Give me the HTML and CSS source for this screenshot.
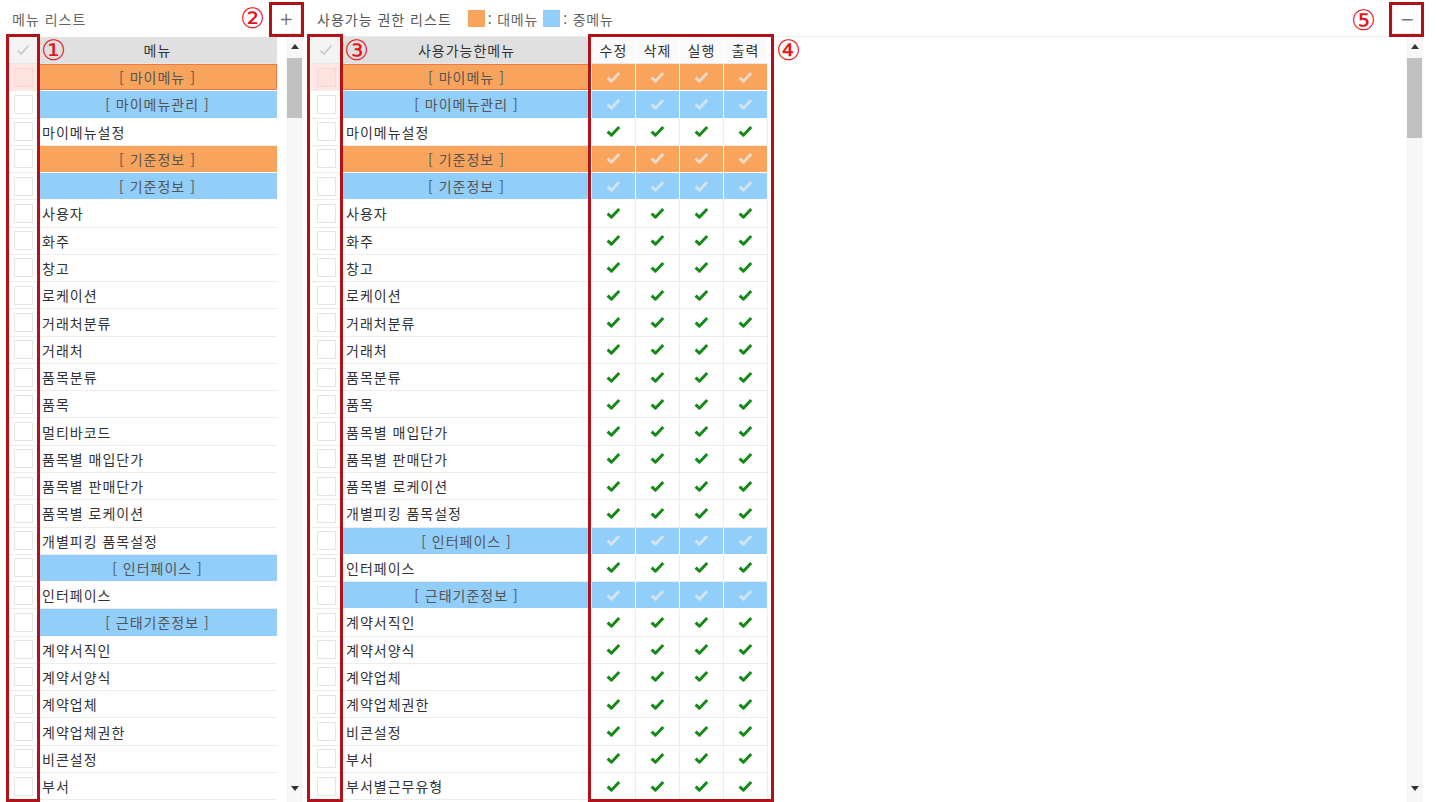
FILE: index.html
```html
<!DOCTYPE html>
<html lang="ko">
<head>
  <meta charset="UTF-8">
  <title>메뉴 권한 관리</title>
  <link rel="stylesheet" href="styles.css">
</head>
<body>
  <div class="screen">
    <div class="panel panel-left">
      <div class="panel-head">
        <span class="title">메뉴 리스트</span>
        <button class="tool-btn">+</button>
      </div>
      <div class="grid">
        <div class="grid-body">
          <div class="row head">
            <div class="cell cell-check head-check"><svg width="14" height="12" viewBox="0 0 14 12"><path d="M1.5 6.5 L5 10 L12.5 1.5" fill="none" stroke="#c8c8c8" stroke-width="1.6"/></svg></div>
            <div class="cell cell-menu head-menu left-menu">메뉴</div>
          </div>
          <div id="left-rows"></div>
        </div>
        <div class="scrollbar">
          <span class="arrow up"></span>
          <span class="thumb thumb-left"></span>
          <span class="arrow down"></span>
        </div>
      </div>
    </div>

    <div class="panel panel-right">
      <div class="panel-head">
        <div class="title-line">
          <span class="title title-dark">사용가능 권한 리스트</span>
          <span class="legend"><i class="swatch swatch-big"></i>: 대메뉴 <i class="swatch swatch-mid"></i>: 중메뉴</span>
        </div>
        <button class="tool-btn">&minus;</button>
      </div>
      <div class="grid grid-right">
        <div class="grid-body">
          <div class="row head">
            <div class="cell cell-check head-check"><svg width="14" height="12" viewBox="0 0 14 12"><path d="M1.5 6.5 L5 10 L12.5 1.5" fill="none" stroke="#c8c8c8" stroke-width="1.6"/></svg></div>
            <div class="cell cell-menu head-menu right-menu">사용가능한메뉴</div>
            <div class="cell cell-perm head-perm">수정</div>
            <div class="cell cell-perm head-perm">삭제</div>
            <div class="cell cell-perm head-perm">실행</div>
            <div class="cell cell-perm head-perm">출력</div>
            <div class="cell cell-fill"></div>
          </div>
          <div id="right-rows"></div>
        </div>
        <div class="scrollbar">
          <span class="arrow up"></span>
          <span class="thumb thumb-right"></span>
          <span class="arrow down"></span>
        </div>
      </div>
    </div>

    <!-- 설명용 표시 -->
    <div class="mark box-1"></div>
    <div class="mark box-2"></div>
    <div class="mark box-3"></div>
    <div class="mark box-4"></div>
    <div class="mark box-5"></div>
    <span class="num num-1">①</span>
    <span class="num num-2">②</span>
    <span class="num num-3">③</span>
    <span class="num num-4">④</span>
    <span class="num num-5">⑤</span>
  </div>

  <script>
    const leftMenus = [
      ['big', '마이메뉴'], ['mid', '마이메뉴관리'], ['', '마이메뉴설정'],
      ['big', '기준정보'], ['mid', '기준정보'], ['', '사용자'], ['', '화주'],
      ['', '창고'], ['', '로케이션'], ['', '거래처분류'], ['', '거래처'],
      ['', '품목분류'], ['', '품목'], ['', '멀티바코드'], ['', '품목별 매입단가'],
      ['', '품목별 판매단가'], ['', '품목별 로케이션'], ['', '개별피킹 품목설정'],
      ['mid', '인터페이스'], ['', '인터페이스'], ['mid', '근태기준정보'],
      ['', '계약서직인'], ['', '계약서양식'], ['', '계약업체'], ['', '계약업체권한'],
      ['', '비콘설정'], ['', '부서']
    ];

    const rightMenus = [
      ['big', '마이메뉴'], ['mid', '마이메뉴관리'], ['', '마이메뉴설정'],
      ['big', '기준정보'], ['mid', '기준정보'], ['', '사용자'], ['', '화주'],
      ['', '창고'], ['', '로케이션'], ['', '거래처분류'], ['', '거래처'],
      ['', '품목분류'], ['', '품목'], ['', '품목별 매입단가'], ['', '품목별 판매단가'],
      ['', '품목별 로케이션'], ['', '개별피킹 품목설정'], ['mid', '인터페이스'],
      ['', '인터페이스'], ['mid', '근태기준정보'], ['', '계약서직인'], ['', '계약서양식'],
      ['', '계약업체'], ['', '계약업체권한'], ['', '비콘설정'], ['', '부서'],
      ['', '부서별근무유형']
    ];

    const check = '<svg width="15" height="13" viewBox="0 0 15 13"><path d="M1.6 6.6 L5.4 10.2 L13.2 2" fill="none" stroke="currentColor" stroke-width="3" stroke-linejoin="round"/></svg>';

    function buildRows(list, withPerms) {
      return list.map(function (item, i) {
        const type = item[0];
        const label = type ? '[ ' + item[1] + ' ]' : item[1];
        let cls = 'row';
        if (type) cls += ' row-' + type;
        if (i === 0) cls += ' selected';
        let html = '<div class="' + cls + '">';
        html += '<div class="cell cell-check"><span class="box"></span></div>';
        html += '<div class="cell cell-menu ' + (withPerms ? 'right-menu' : 'left-menu') + '">' + label + '</div>';
        if (withPerms) {
          for (let k = 0; k < 4; k++) html += '<div class="cell cell-perm">' + check + '</div>';
          html += '<div class="cell cell-fill"></div>';
        }
        return html + '</div>';
      }).join('');
    }

    document.getElementById('left-rows').innerHTML = buildRows(leftMenus, false);
    document.getElementById('right-rows').innerHTML = buildRows(rightMenus, true);
  </script>
</body>
</html>
```

FILE: styles.css
```css
* {
  box-sizing: border-box;
}
body {
  margin: 0;
  font-family: "Noto Sans CJK KR", "Noto Sans", sans-serif;
  font-size: 14px;
  letter-spacing: 1px;
  color: #333;
  background-color: #fff;
}
.screen {
  position: relative;
  display: flex;
  gap: 8px;
  height: 802px;
  padding-left: 9px;
  overflow: hidden;
}
.panel {
  display: flex;
  flex-direction: column;
}
.panel-left {
  width: 294px;
}
.panel-right {
  width: 1114px;
}
.panel-head {
  height: 37px;
  display: flex;
  align-items: center;
  justify-content: space-between;
}
.panel-left .panel-head {
  padding: 0 2px 0 3px;
}
.panel-right .panel-head {
  padding: 0 3px 0 6px;
}
.title {
  color: #666;
  font-size: 14px;
}
.title-dark {
  color: #555;
}
.title-line {
  display: flex;
  align-items: center;
}
.legend {
  display: flex;
  align-items: center;
  margin-left: 16px;
  color: #666;
  font-size: 14px;
  letter-spacing: 0.8px;
}
.swatch {
  display: inline-block;
  width: 17px;
  height: 17px;
  margin-right: 3px;
}
.swatch-big {
  background-color: #f8a45c;
}
.swatch-mid {
  background-color: #91cefa;
  margin-left: 5px;
}
.tool-btn {
  width: 30px;
  height: 30px;
  padding: 0;
  border: 1px solid #ececec;
  background-color: #fff;
  color: #777;
  font-family: "DejaVu Sans", sans-serif;
  font-size: 17px;
  line-height: 26px;
  letter-spacing: 0;
}
.grid {
  display: flex;
  gap: 3px;
  flex: 1;
  overflow: hidden;
}
.grid-right {
  border-top: 1px solid #ececec;
  margin-top: -1px;
}
.grid-body {
  flex: 1;
  display: flex;
  flex-direction: column;
}
.row {
  display: flex;
  height: 27.27px;
  flex-shrink: 0;
}
.row.head {
  height: 27px;
}
.cell {
  display: flex;
  align-items: center;
  border-bottom: 1px solid #ececec;
  white-space: nowrap;
}
.cell-check {
  width: 29px;
  justify-content: center;
  border-right: 1px solid #e8e8e8;
}
.grid-right .cell-check {
  width: 31px;
}
.box {
  width: 19px;
  height: 19px;
  border: 1px solid #e4e4e4;
  background-color: #fff;
}
.left-menu {
  width: 239px;
  padding-left: 4px;
}
.right-menu {
  width: 249px;
  padding-left: 4px;
  margin-right: 1px;
}
.cell-perm {
  width: 44px;
  justify-content: center;
  color: #17891a;
  border-right: 1px solid #ececec;
}
.cell-fill {
  flex: 1;
  border-bottom: none;
}
.head .cell {
  border-bottom: 1px solid #e6e6e6;
}
.head-check {
  background-color: #f3f3f3;
}
.head-menu {
  justify-content: center;
  background-color: #e0e0e0;
  padding-left: 0;
}
.head-perm {
  background-color: #fafafa;
  border-right: 1px solid #fff;
  color: #333;
}
.head .cell-fill {
  border-bottom: none;
}
.row-big .cell-menu,
.row-big .cell-perm {
  background-color: #f8a45c;
}
.row-mid .cell-menu,
.row-mid .cell-perm {
  background-color: #91cefa;
}
.row-big .cell-menu,
.row-mid .cell-menu {
  justify-content: center;
  padding-left: 0;
  color: #555;
  border-bottom-color: #fff;
}
.row-big .cell-perm,
.row-mid .cell-perm {
  color: rgba(235, 235, 235, 0.75);
  border-right-color: #fff;
  border-bottom-color: #fff;
}
.row-mid .cell-perm {
  color: rgba(215, 230, 240, 0.9);
}
.selected .cell-check {
  background-color: #fde7e3;
}
.selected .box {
  background-color: #fde2dd;
  border-color: #f9d6d0;
}
.selected .cell-menu {
  box-shadow: inset 0 0 0 1px #f07a45;
}
.scrollbar {
  width: 17px;
  display: flex;
  flex-direction: column;
  align-items: center;
  background-color: #f7f7f7;
  padding-bottom: 4px;
}
.grid-right .scrollbar {
  margin-right: 2px;
}
.arrow {
  width: 0;
  height: 0;
  border-left: 4px solid transparent;
  border-right: 4px solid transparent;
  margin: 7px 0;
}
.arrow.up {
  border-bottom: 5px solid #333;
  margin-bottom: 9px;
}
.arrow.down {
  border-top: 5px solid #333;
  margin-top: auto;
}
.thumb {
  width: 15px;
  background-color: #c1c1c1;
}
.thumb-left {
  height: 60px;
}
.thumb-right {
  height: 80px;
}
.mark {
  position: absolute;
  border: 3px solid #b3111a;
}
.box-1 {
  left: 6px;
  top: 34px;
  width: 34px;
  height: 768px;
}
.box-2 {
  left: 269px;
  top: 2px;
  width: 35px;
  height: 35px;
}
.box-3 {
  left: 307px;
  top: 34px;
  width: 36px;
  height: 768px;
}
.box-4 {
  left: 588px;
  top: 34px;
  width: 186px;
  height: 768px;
}
.box-5 {
  left: 1389px;
  top: 2px;
  width: 35px;
  height: 35px;
}
.num {
  position: absolute;
  color: #e5141c;
  font-family: "DejaVu Sans", sans-serif;
  font-size: 28px;
  line-height: 1;
  letter-spacing: 0;
}
.num-1 {
  left: 41px;
  top: 37px;
}
.num-2 {
  left: 240px;
  top: 5px;
}
.num-3 {
  left: 344px;
  top: 37px;
}
.num-4 {
  left: 776px;
  top: 37px;
}
.num-5 {
  left: 1351px;
  top: 7px;
}
```
